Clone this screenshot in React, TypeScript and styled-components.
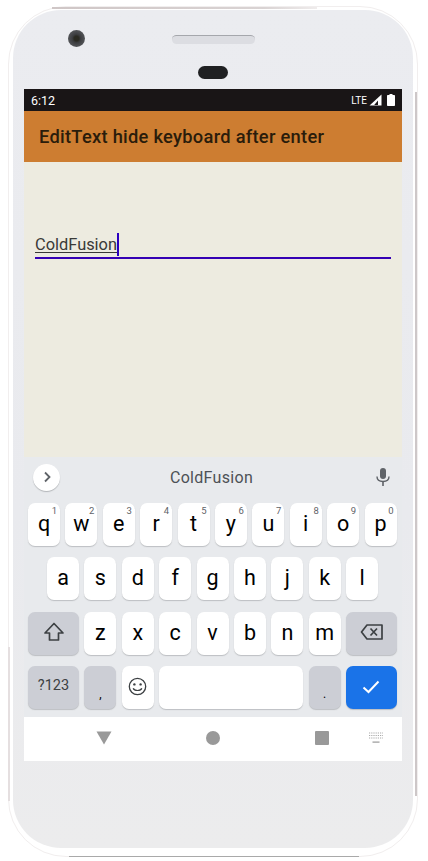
import React from "react";
import styled, { createGlobalStyle } from "styled-components";

const topRow = [
  ["q", "1"], ["w", "2"], ["e", "3"], ["r", "4"], ["t", "5"],
  ["y", "6"], ["u", "7"], ["i", "8"], ["o", "9"], ["p", "0"],
];
const midRow = ["a", "s", "d", "f", "g", "h", "j", "k", "l"];
const lowRow = ["z", "x", "c", "v", "b", "n", "m"];

const App = () => {
  return (
    <>
      <GlobalStyle />
      <Shell>
        <RimTop />
        <RimBottom />
        <RimSide $left />
        <RimSide />
        <Phone>
          <Bezel>
            <Camera />
            <Speaker />
            <Sensor />
          </Bezel>
          <Screen>
            <StatusBar>
              <span>6:12</span>
              <StatusIcons>
                <Lte>LTE</Lte>
                <svg width="13" height="12" viewBox="0 0 13 12">
                  <path d="M12.5 0.5V11.5H0.5Z" fill="#fff" />
                  <path d="M9 6.5V11H5.2Z" fill="#191516" />
                </svg>
                <svg width="8" height="12" viewBox="0 0 8 12">
                  <path d="M2.5 0H5.5V1H7.2A.8.8 0 0 1 8 1.8V11.2A.8.8 0 0 1 7.2 12H.8A.8.8 0 0 1 0 11.2V1.8A.8.8 0 0 1 .8 1H2.5Z" fill="#fff" />
                </svg>
              </StatusIcons>
            </StatusBar>
            <AppBar>EditText hide keyboard after enter</AppBar>
            <Content>
              <Field>
                <FieldText>ColdFusion</FieldText>
                <Caret />
              </Field>
            </Content>
            <Keyboard>
              <Strip>
                <RoundButton>
                  <svg width="12" height="12" viewBox="0 0 12 12" fill="none">
                    <path d="M4 1.5L8.5 6L4 10.5" stroke="#5f6368" strokeWidth="1.8" />
                  </svg>
                </RoundButton>
                <Suggestion>ColdFusion</Suggestion>
                <svg width="14" height="18" viewBox="0 0 14 18">
                  <rect x="4" y="0" width="6" height="11" rx="3" fill="#5f6368" />
                  <path d="M1 8.5C1 12 3.8 13.5 7 13.5S13 12 13 8.5" fill="none" stroke="#5f6368" strokeWidth="1.4" />
                  <rect x="6.2" y="13" width="1.6" height="5" fill="#5f6368" />
                </svg>
              </Strip>
              <Rows>
                <Row>
                  {topRow.map(([letter, hint]) => (
                    <Key key={letter}>
                      {letter}
                      <Hint>{hint}</Hint>
                    </Key>
                  ))}
                </Row>
                <Row $inset>
                  {midRow.map((letter) => (
                    <Key key={letter}>{letter}</Key>
                  ))}
                </Row>
                <Row>
                  <Key $wide $muted>
                    <svg width="22" height="22" viewBox="0 0 22 22" fill="none">
                      <path d="M11 2.5L20 12H15.5V19H6.5V12H2Z" stroke="#3c4043" strokeWidth="1.7" strokeLinejoin="round" />
                    </svg>
                  </Key>
                  {lowRow.map((letter) => (
                    <Key key={letter}>{letter}</Key>
                  ))}
                  <Key $wide $muted>
                    <svg width="24" height="18" viewBox="0 0 24 18" fill="none">
                      <path d="M7 2H22V16H7L1.5 9Z" stroke="#3c4043" strokeWidth="1.7" strokeLinejoin="round" />
                      <path d="M10.5 5.5L17 12.5M17 5.5L10.5 12.5" stroke="#3c4043" strokeWidth="1.7" />
                    </svg>
                  </Key>
                </Row>
                <Row>
                  <Key $wide $muted $small>?123</Key>
                  <Key $muted $mark>,</Key>
                  <Key>
                    <svg width="19" height="19" viewBox="0 0 19 19" fill="none">
                      <circle cx="9.5" cy="9.5" r="8.2" stroke="#3c4043" strokeWidth="1.3" />
                      <circle cx="6.4" cy="7.4" r="1.2" fill="#3c4043" />
                      <circle cx="12.6" cy="7.4" r="1.2" fill="#3c4043" />
                      <path d="M5.2 11.3C6.2 14.2 12.8 14.2 13.8 11.3" stroke="#3c4043" strokeWidth="1.2" />
                    </svg>
                  </Key>
                  <SpaceKey />
                  <Key $muted $mark>.</Key>
                  <Key $wide $accent>
                    <svg width="18" height="14" viewBox="0 0 18 14" fill="none">
                      <path d="M1.5 7.5L6.5 12L16.5 1.5" stroke="#fff" strokeWidth="2" />
                    </svg>
                  </Key>
                </Row>
              </Rows>
            </Keyboard>
            <NavBar>
              <NavIcon>
                <svg width="16" height="14" viewBox="0 0 16 14">
                  <path d="M0.5 0.5H15.5L8 13.5Z" fill="#999" />
                </svg>
              </NavIcon>
              <NavIcon $gap={94}>
                <svg width="14" height="14" viewBox="0 0 14 14">
                  <circle cx="7" cy="7" r="7" fill="#999" />
                </svg>
              </NavIcon>
              <NavIcon $gap={95}>
                <svg width="14" height="14" viewBox="0 0 14 14">
                  <rect width="14" height="14" rx="1" fill="#999" />
                </svg>
              </NavIcon>
              <NavIcon $gap={39}>
                <svg width="16" height="12" viewBox="0 0 16 12">
                  <path d="M1 1H15M1 3.5H15M1 6H15" stroke="#aaa" strokeWidth="1.2" strokeDasharray="1.2 1" />
                  <rect x="4.5" y="9.5" width="7" height="1.2" fill="#999" />
                </svg>
              </NavIcon>
            </NavBar>
          </Screen>
        </Phone>
      </Shell>
    </>
  );
};

export default App;

const GlobalStyle = createGlobalStyle`
  html, body {
    margin: 0;
    background: #fff;
  }
  body {
    width: 428px;
    height: 861px;
    overflow: hidden;
    font-family: Roboto, "Liberation Sans", sans-serif;
  }
`;

const Shell = styled.div`
  position: relative;
  box-sizing: border-box;
  width: 410px;
  height: 851px;
  margin: 6px 0 0 8px;
  padding: 3px 4px 8px 4px;
  border: 1px solid #f1eeee;
  border-radius: 58px;
  background: #fff;
`;

const RimTop = styled.div`
  position: absolute;
  top: 0;
  left: 43px;
  width: 265px;
  height: 2px;
  background: linear-gradient(90deg, #cfc6c6, #d9d3d3 80%, #efecec);
`;

const RimBottom = styled.div`
  position: absolute;
  bottom: -1px;
  left: 60px;
  width: 290px;
  height: 1px;
  background: #a9a9a9;
`;

const RimSide = styled.div<{ $left?: boolean }>`
  position: absolute;
  top: ${(p) => (p.$left ? "640px" : "85px")};
  bottom: ${(p) => (p.$left ? "55px" : "60px")};
  ${(p) => (p.$left ? "left: -1px;" : "right: 0;")}
  width: 2px;
  background: ${(p) => (p.$left ? "#e5dfe0" : "#cdc7c8")};
`;

const Phone = styled.div`
  display: flex;
  flex-direction: column;
  box-sizing: border-box;
  height: 100%;
  padding: 0 11px;
  border-radius: 48px;
  background: linear-gradient(180deg, #ebecf0 0%, #e9eaee 60%, #ececed 100%);
`;

const Bezel = styled.div`
  position: relative;
  flex: none;
  height: 79px;
`;

const Camera = styled.div`
  position: absolute;
  top: 20px;
  left: 44px;
  width: 17px;
  height: 17px;
  border-radius: 50%;
  background: radial-gradient(circle, #2a2a22 0 20%, #3c3d40 35%, #66686c 100%);
`;

const Speaker = styled.div`
  position: absolute;
  top: 25px;
  left: 148px;
  width: 83px;
  height: 9px;
  box-sizing: border-box;
  border-top: 1px solid #a5a7ac;
  border-radius: 5px;
  background: #dcdde2;
`;

const Sensor = styled.div`
  position: absolute;
  top: 56px;
  left: 174px;
  width: 30px;
  height: 13px;
  border-radius: 7px;
  background: #1f2022;
`;

const Screen = styled.div`
  display: flex;
  flex-direction: column;
  width: 378px;
  height: 672px;
  flex: none;
`;

const StatusBar = styled.div`
  display: flex;
  align-items: center;
  justify-content: space-between;
  flex: none;
  height: 22px;
  padding: 0 7px;
  background: #191516;
  color: #fff;
  font-size: 12.5px;
`;

const StatusIcons = styled.div`
  display: flex;
  align-items: center;
  gap: 2px;

  svg + svg {
    margin-left: 3px;
  }
`;

const Lte = styled.span`
  font-size: 10px;
`;

const AppBar = styled.div`
  display: flex;
  align-items: center;
  flex: none;
  height: 51px;
  padding-left: 15px;
  background: #cd7d31;
  color: #2a1c0b;
  font-size: 18.3px;
  font-weight: 500;
  letter-spacing: 0.28px;
`;

const Content = styled.div`
  flex: none;
  box-sizing: border-box;
  height: 295px;
  padding: 70px 11px 0;
  background: #edebe0;
`;

const Field = styled.div`
  display: flex;
  align-items: center;
  height: 24px;
  padding-bottom: 1px;
  border-bottom: 2px solid #3500b4;
`;

const FieldText = styled.span`
  color: #3a3a38;
  font-size: 16.4px;
  text-decoration: underline;
  text-underline-offset: 2px;
`;

const Caret = styled.span`
  width: 2px;
  height: 23px;
  background: #2a00c0;
`;

const Keyboard = styled.div`
  display: flex;
  flex-direction: column;
  flex: none;
  box-sizing: border-box;
  height: 260px;
  background: #e8eaed;
`;

const Strip = styled.div`
  display: flex;
  align-items: center;
  justify-content: space-between;
  flex: none;
  box-sizing: border-box;
  height: 43px;
  padding: 0 12px 3px 9px;
`;

const RoundButton = styled.div`
  display: flex;
  align-items: center;
  justify-content: center;
  width: 27px;
  height: 27px;
  border-radius: 50%;
  background: #fff;
  box-shadow: 0 1px 1px rgba(60, 64, 67, 0.3);
`;

const Suggestion = styled.div`
  margin-right: 13px;
  color: #4d5156;
  font-size: 16px;
  letter-spacing: 0.3px;
`;

const Rows = styled.div`
  display: flex;
  flex-direction: column;
  gap: 11.4px;
  padding: 3px 5px 0 4px;
`;

const Row = styled.div<{ $inset?: boolean }>`
  display: flex;
  gap: 5.4px;
  height: 43px;
  padding: 0 ${(p) => (p.$inset ? "19px" : "0")};
`;

const Key = styled.div<{
  $wide?: boolean;
  $muted?: boolean;
  $accent?: boolean;
  $small?: boolean;
  $mark?: boolean;
}>`
  position: relative;
  display: flex;
  align-items: ${(p) => (p.$mark ? "flex-end" : "center")};
  justify-content: center;
  flex: none;
  box-sizing: border-box;
  width: ${(p) => (p.$wide ? "51px" : "32px")};
  height: 43px;
  padding-bottom: ${(p) => (p.$mark ? "9px" : "2px")};
  border-radius: 7px;
  background: ${(p) => (p.$accent ? "#1a73e8" : p.$muted ? "#ccced5" : "#fff")};
  box-shadow: 0 1px 1px rgba(60, 64, 67, 0.25);
  color: ${(p) => (p.$small ? "#3c4043" : "#000")};
  font-size: ${(p) => (p.$small ? "14.5px" : p.$mark ? "12px" : "21.5px")};
  line-height: 1;
`;

const Hint = styled.span`
  position: absolute;
  top: 3px;
  right: 3px;
  color: #5f6368;
  font-size: 9.5px;
`;

const SpaceKey = styled.div`
  flex: none;
  width: 144px;
  height: 43px;
  border-radius: 7px;
  background: #fff;
  box-shadow: 0 1px 1px rgba(60, 64, 67, 0.25);
`;

const NavBar = styled.div`
  display: flex;
  flex: none;
  align-items: center;
  box-sizing: border-box;
  height: 44px;
  padding: 0 0 3px 72px;
  background: #fff;
`;

const NavIcon = styled.div<{ $gap?: number }>`
  display: flex;
  margin-left: ${(p) => p.$gap ?? 0}px;
`;
